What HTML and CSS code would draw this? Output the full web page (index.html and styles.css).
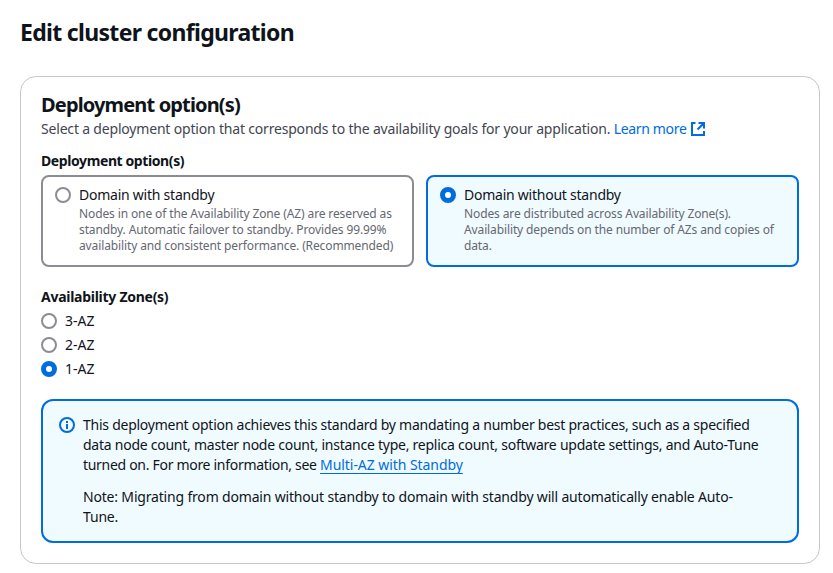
FILE: index.html
```html
<!DOCTYPE html>
<html lang="en">
<head>
<meta charset="utf-8">
<title>Edit cluster configuration</title>
<link rel="stylesheet" href="styles.css">
</head>
<body>
<h1>Edit cluster configuration</h1>
<main class="panel">
  <h2>Deployment option(s)</h2>
  <p class="desc">Select a deployment option that corresponds to the availability goals for your application. <a class="learn" href="#">Learn more<svg width="16" height="16" viewBox="0 0 16 16" fill="none" stroke="currentColor" stroke-width="2"><path d="M5.5 2H2v12h12v-4M8.5 2H14v5.500M14 2L7.500 8.500"/></svg></a></p>
  <h3>Deployment option(s)</h3>
  <div class="tiles">
    <label class="tile">
      <span class="radio"></span>
      <span class="tile-text"><span class="name">Domain with standby</span>
      <span class="sub">Nodes in one of the Availability Zone (AZ) are reserved as<br>standby. Automatic failover to standby. Provides 99.99%<br>availability and consistent performance. (Recommended)</span></span>
    </label>
    <label class="tile selected">
      <span class="radio on"></span>
      <span class="tile-text"><span class="name">Domain without standby</span>
      <span class="sub">Nodes are distributed across Availability Zone(s).<br>Availability depends on the number of AZs and copies of<br>data.</span></span>
    </label>
  </div>
  <h3 class="az-title">Availability Zone(s)</h3>
  <div class="zones">
    <label><span class="radio"></span>3-AZ</label>
    <label><span class="radio"></span>2-AZ</label>
    <label><span class="radio on"></span>1-AZ</label>
  </div>
  <div class="alert">
    <svg class="info" width="16" height="16" viewBox="0 0 16 16" fill="none" stroke="currentColor" stroke-width="2"><circle cx="8" cy="8" r="7"/><path d="M8 12V7M8 6V4"/></svg>
    <div class="alert-text">
      <p>This deployment option achieves this standard by mandating a number best practices, such as a specified<br>data node count, master node count, instance type, replica count, software update settings, and Auto-Tune<br><span class="lead">turned on. For more information, see </span><a class="under" href="#">Multi-AZ with Standby</a></p>
      <p class="note">Note: Migrating from domain without standby to domain with standby will automatically enable Auto-<br>Tune.</p>
    </div>
  </div>
</main>
</body>
</html>
```
FILE: styles.css
```css
* { box-sizing: border-box; margin: 0; }
body {
  background: #fff;
  color: #0f141a;
  font: 14px/20px "Noto Sans", "Open Sans", sans-serif;
  padding: 18px 13px 0 20px;
  white-space: nowrap;
}
h1 { font-size: 23px; line-height: 29px; height: 58px; letter-spacing: -0.68px; }
.panel {
  height: 488px;
  border: 1px solid #c6c6cd;
  border-radius: 16px;
  padding: 16px 20px 0;
}
h2 { font-size: 20px; line-height: 24px; letter-spacing: -0.85px; }
.desc { color: #424650; margin-top: 2px; letter-spacing: -0.185px; }
a { color: #006ce0; text-decoration: none; }
.learn { letter-spacing: -0.35px; }
.learn svg { margin-left: 4px; vertical-align: -3px; }
h3 { font-size: 14px; line-height: 20px; margin-top: 12px; letter-spacing: -0.4px; }
.tiles { display: grid; grid-template-columns: 373px 373px; gap: 12px; margin-top: 4px; }
.tile {
  display: flex;
  gap: 8px;
  height: 92px;
  border: 2px solid #8c8c94;
  border-radius: 8px;
  padding: 8px 12px;
}
.tile.selected { border-color: #006ce0; background: #f0fbff; }
.radio {
  flex: none;
  width: 16px;
  height: 16px;
  margin-top: 2px;
  border: 2px solid #8c8c94;
  border-radius: 50%;
  background: #fff;
}
.radio.on { border: 5px solid #006ce0; }
.name, .sub { display: block; }
.name { letter-spacing: -0.24px; }
.sub { margin-top: 1px; font-size: 12px; line-height: 16px; color: #656871; letter-spacing: -0.12px; }
.az-title { margin-top: 20px; letter-spacing: -0.27px; }
.zones { display: grid; gap: 4px; margin-top: 4px; }
.zones label { display: flex; gap: 8px; }
.alert {
  display: flex;
  gap: 8px;
  height: 144px;
  margin-top: 20px;
  border: 2px solid #006ce0;
  border-radius: 12px;
  background: #f0fbff;
  padding: 14px 16px;
}
.info { color: #006ce0; margin-top: 2px; }
.alert-text { letter-spacing: -0.25px; }
.alert-text p + p { margin-top: 12px; }
.alert-text .note { letter-spacing: -0.18px; }
.lead { letter-spacing: -0.3px; }
.under { letter-spacing: -0.06px; text-decoration: underline; text-underline-offset: 3px; text-decoration-skip-ink: none; }
```
